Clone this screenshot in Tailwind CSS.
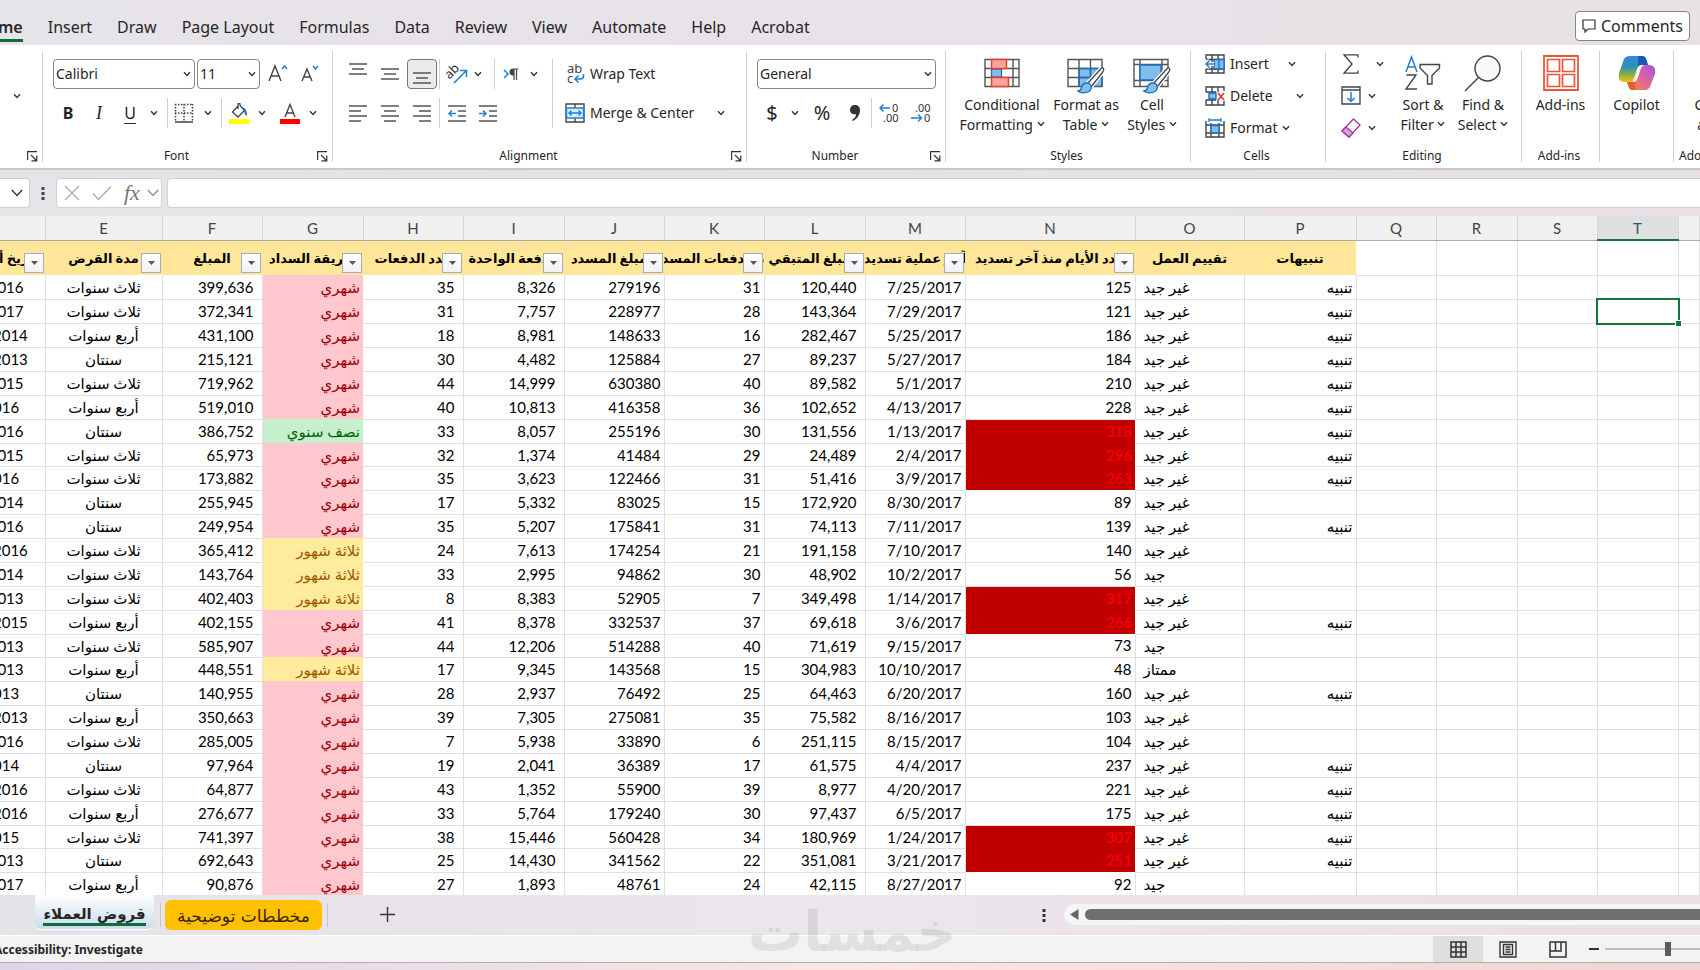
<!DOCTYPE html>
<html lang="en">
  <head>
    <meta charset="UTF-8" />
    <meta name="viewport" content="width=device-width, initial-scale=1.0" />
    <title>Workbook</title>
    <script src="https://cdn.jsdelivr.net/npm/@tailwindcss/browser@4"></script>
  </head>
  <body class="relative flex h-screen flex-col overflow-hidden bg-linear-to-r from-[#e6e3e9] to-[#e8e2e6] font-['Noto_Sans',sans-serif] text-[#262626]">
    <!-- shared icons -->
    <svg class="hidden">
      <symbol id="chev" viewBox="0 0 8 6"><path d="M1 1.2 4 4.4 7 1.2" fill="none" stroke="#333" stroke-width="1.4" /></symbol>
      <symbol id="launch" viewBox="0 0 11 11"><path d="M.6 9V.6H10M4 4l5 5M9.8 4.5v5.3H4.5" fill="none" stroke="#333" stroke-width="1.2" /></symbol>
      <symbol id="brush" viewBox="0 0 28 27">
        <path d="M26 1c1.400 1 .5 3-1 5L14 20l-4-3L21 5c2-2.500 4-5 5-4Z" fill="#fff" stroke="#fff" stroke-width="4" />
        <path d="M26 1c1.400 1 .5 3-1 5L14 20l-4-3L21 5c2-2.500 4-5 5-4Z" fill="#fff" stroke="#444" stroke-width="1.300" />
        <path d="M10 16c-4 0-5 2-5.500 4.500C4 23 2.500 24 .8 24c3 2.500 12.500 3 13.500-3 .3-3-1.500-5-4.300-5Z" fill="#83bdec" stroke="#1a6fc0" stroke-width="1.300" />
      </symbol>
    </svg>

    <!-- ribbon tabs -->
    <header class="flex h-[45px] shrink-0 items-start justify-between pr-[10px] text-base">
      <nav class="-ml-6 flex gap-[25px] pt-4 whitespace-nowrap leading-[22px]">
        <a href="#" class="border-b-[3px] border-[#0f6b38] pb-px font-semibold">Home</a>
        <a href="#">Insert</a>
        <a href="#">Draw</a>
        <a href="#">Page Layout</a>
        <a href="#">Formulas</a>
        <a href="#">Data</a>
        <a href="#">Review</a>
        <a href="#">View</a>
        <a href="#">Automate</a>
        <a href="#">Help</a>
        <a href="#">Acrobat</a>
      </nav>
      <button class="mt-[11px] flex h-[30px] items-center gap-[5px] rounded border border-[#868686] bg-white px-[6px]">
        <svg class="size-[14px]" viewBox="0 0 14 14"><path d="M1 1h12v9H6l-3 3v-3H1Z" fill="none" stroke="#333" stroke-width="1.200" /></svg>
        Comments
      </button>
    </header>

    <!-- ribbon -->
    <section class="flex h-[125px] shrink-0 overflow-hidden border-b-2 border-[#c8c8c8] bg-white pt-[6px] pb-[6px] text-sm whitespace-nowrap">
      <div class="flex w-[43px] shrink-0 flex-col items-end justify-between border-r border-[#d0d0d0]">
        <button aria-label="Paste options" class="mt-[42px] mr-[21px]"><svg class="h-[6px] w-2"><use href="#chev" /></svg></button>
        <button aria-label="Clipboard settings" class="mr-1"><svg class="size-[11px]"><use href="#launch" /></svg></button>
      </div>

      <div class="flex w-[290px] shrink-0 flex-col justify-between border-r border-[#d0d0d0]">
        <div class="flex flex-col gap-[9px] pt-2 pl-[10px]">
          <div class="flex h-[30px] items-center">
            <div class="relative mr-[2px]">
              <select aria-label="Font" class="block h-[30px] w-[142px] appearance-none rounded border border-[#868686] bg-white pl-[2px]"><option>Calibri</option></select>
              <svg class="pointer-events-none absolute top-3 right-1 h-[6px] w-2"><use href="#chev" /></svg>
            </div>
            <div class="relative">
              <select aria-label="Font size" class="block h-[30px] w-[63px] appearance-none rounded border border-[#868686] bg-white pl-[2px]"><option>11</option></select>
              <svg class="pointer-events-none absolute top-3 right-1 h-[6px] w-2"><use href="#chev" /></svg>
            </div>
            <button aria-label="Increase font size" class="flex w-9 justify-center">
              <svg class="h-5 w-5" viewBox="0 0 20 20" fill="none"><path d="M1 17 7 2l6 15M3 12h8" stroke="#444" stroke-width="1.400" /><path d="m14 5 2.500-3L19 5" stroke="#1f7fd1" stroke-width="1.500" /></svg>
            </button>
            <button aria-label="Decrease font size" class="flex w-7 justify-center">
              <svg class="h-5 w-5" viewBox="0 0 20 20" fill="none"><path d="M2 17 7 5l5 12M4 13h6" stroke="#444" stroke-width="1.400" /><path d="m13 2 2.500 3L18 2" stroke="#1f7fd1" stroke-width="1.500" /></svg>
            </button>
          </div>
          <div class="flex h-[30px] items-center">
            <button class="w-[30px] text-base font-bold">B</button>
            <button class="w-8 font-['Liberation_Serif',serif] text-lg italic">I</button>
            <button class="w-[30px] text-base underline underline-offset-4">U</button>
            <button aria-label="Underline options" class="flex w-[18px] justify-center"><svg class="h-[6px] w-2"><use href="#chev" /></svg></button>
            <span class="ml-1 h-[30px] w-px bg-[#d0d0d0]"></span>
            <button aria-label="Borders" class="flex w-8 justify-center">
              <svg class="size-5" viewBox="0 0 20 20" fill="none" stroke="#444"><path d="M1 1.500h18M1 10h18M1.500 1v18M10 1v18M18.500 1v18" stroke-width="1.500" stroke-dasharray="1.500 1.500" /><path d="M1 19h18" stroke-width="1.500" /></svg>
            </button>
            <button aria-label="Border options" class="flex w-4 justify-center"><svg class="h-[6px] w-2"><use href="#chev" /></svg></button>
            <span class="ml-[5px] h-[30px] w-px bg-[#d0d0d0]"></span>
            <button aria-label="Fill color" class="flex w-[34px] justify-center">
              <svg class="h-[21px] w-5" viewBox="0 0 20 21"><path d="M9.500 2.500 3.500 9l5.500 5 6.500-6.500L11 2.500V1.300c0-1.500-2-1.500-2 0V6" fill="#fff" stroke="#444" stroke-width="1.300" /><path d="M13 4.500c3.500 0 5 3 5 8.500-2-.5-2.500-3-3-5.500Z" fill="#1a6fc0" /><path d="M0 16h20v5H0z" fill="#ff0" /></svg>
            </button>
            <button aria-label="Fill color options" class="flex w-3 justify-center"><svg class="h-[6px] w-2"><use href="#chev" /></svg></button>
            <button aria-label="Font color" class="ml-2 flex w-7 justify-center">
              <svg class="h-[21px] w-5" viewBox="0 0 20 21"><path d="M5 14 10 1.500 15 14M6.800 10h6.400" fill="none" stroke="#444" stroke-width="1.400" /><path d="M0 16h20v5H0z" fill="red" /></svg>
            </button>
            <button aria-label="Font color options" class="flex w-[18px] justify-center"><svg class="h-[6px] w-2"><use href="#chev" /></svg></button>
          </div>
        </div>
        <div class="relative pr-[22px] text-center text-xs leading-3">Font
          <button aria-label="Font settings" class="absolute right-1 bottom-0"><svg class="size-[11px]"><use href="#launch" /></svg></button>
        </div>
      </div>

      <div class="flex w-[414px] shrink-0 flex-col justify-between border-r border-[#d0d0d0]">
        <div class="flex pt-2">
          <div class="flex w-[220px] flex-col gap-[9px] border-r border-[#d0d0d0] pl-[9px]">
            <div class="flex h-[30px] items-center">
              <button aria-label="Top align" class="flex w-8 justify-center pb-[10px]"><svg class="h-3 w-[18px]" viewBox="0 0 18 12"><path d="M0 1h18M3 6h12M0 11h18" stroke="#555" stroke-width="1.500" /></svg></button>
              <button aria-label="Middle align" class="flex w-8 justify-center"><svg class="h-3 w-[18px]" viewBox="0 0 18 12"><path d="M0 1h18M3 6h12M0 11h18" stroke="#555" stroke-width="1.500" /></svg></button>
              <button aria-label="Bottom align" class="ml-px flex h-[30px] w-[30px] items-end justify-center rounded border border-[#777] bg-[#ebebeb] pb-1"><svg class="h-3 w-[18px]" viewBox="0 0 18 12"><path d="M0 1h18M3 6h12M0 11h18" stroke="#555" stroke-width="1.500" /></svg></button>
              <span class="ml-[2px] h-[30px] w-px bg-[#d0d0d0]"></span>
              <button aria-label="Orientation" class="flex w-[34px] justify-center">
                <svg class="h-5 w-[22px]" viewBox="0 0 22 20"><g transform="rotate(-45 7 8)"><text x="-1" y="11" font-size="13" fill="#333">ab</text></g><path d="M8 19 20 7M14 6.500h6.500V13" fill="none" stroke="#1f7fd1" stroke-width="1.500" /></svg>
              </button>
              <button aria-label="Orientation options" class="flex w-2 justify-center"><svg class="h-[6px] w-2"><use href="#chev" /></svg></button>
              <span class="ml-3 h-[30px] w-px bg-[#d0d0d0]"></span>
              <button aria-label="Text direction" class="flex w-8 justify-center">
                <svg class="h-3 w-4" viewBox="0 0 16 12"><path d="m1 2 4 4-4 4" fill="none" stroke="#1f7fd1" stroke-width="1.500" /><path d="M15.500 1H10a3 3 0 0 0 0 6h.5V1M11 1v11M13.500 1v11" fill="#444" stroke="#444" stroke-width="1.200" /></svg>
              </button>
              <button aria-label="Text direction options" class="flex w-[14px] justify-center"><svg class="h-[6px] w-2"><use href="#chev" /></svg></button>
            </div>
            <div class="flex h-[30px] items-center">
              <button aria-label="Align left" class="flex w-8 justify-center"><svg class="h-[17px] w-[18px]" viewBox="0 0 18 17"><path d="M0 1h18M0 6h12M0 11h18M0 16h12" stroke="#555" stroke-width="1.500" /></svg></button>
              <button aria-label="Center" class="flex w-8 justify-center"><svg class="h-[17px] w-[18px]" viewBox="0 0 18 17"><path d="M0 1h18M3 6h12M0 11h18M3 16h12" stroke="#555" stroke-width="1.500" /></svg></button>
              <button aria-label="Align right" class="flex w-8 justify-center"><svg class="h-[17px] w-[18px]" viewBox="0 0 18 17"><path d="M0 1h18M6 6h12M0 11h18M6 16h12" stroke="#555" stroke-width="1.500" /></svg></button>
              <span class="ml-px h-[30px] w-px bg-[#d0d0d0]"></span>
              <button aria-label="Decrease indent" class="flex w-[34px] justify-center"><svg class="h-[17px] w-[18px]" viewBox="0 0 18 17" fill="none"><path d="M0 1h18M10 6h8M10 11h8M0 16h18" stroke="#555" stroke-width="1.500" /><path d="M8 8.500H1M4 5.500l-3 3 3 3" stroke="#1f7fd1" stroke-width="1.500" /></svg></button>
              <button aria-label="Increase indent" class="flex w-7 justify-center"><svg class="h-[17px] w-[18px]" viewBox="0 0 18 17" fill="none"><path d="M0 1h18M10 6h8M10 11h8M0 16h18" stroke="#555" stroke-width="1.500" /><path d="M0 8.500h7M4 5.500l3 3-3 3" stroke="#1f7fd1" stroke-width="1.500" /></svg></button>
            </div>
          </div>
          <div class="flex flex-col gap-[9px] pl-3">
            <button class="flex h-[30px] items-center gap-[5px]">
              <svg class="size-5" viewBox="0 0 20 20"><text x="2" y="9" font-size="13" fill="#444">ab</text><text x="2" y="19" font-size="13" fill="#444">c</text><path d="M18.500 10v2c0 2-1 3-3 3H10.500M13.500 11.500l-3.500 3.500 3.500 3.500" fill="none" stroke="#1f7fd1" stroke-width="1.600" /></svg>
              Wrap Text
            </button>
            <div class="flex h-[30px] items-center">
              <button class="flex w-36 items-center gap-[5px]">
                <svg class="size-5 shrink-0" viewBox="0 0 20 20" fill="none"><path d="M1 1h18v18H1zM10 1v18" stroke="#444" stroke-width="1.400" /><path d="M1.500 5h17v10h-17z" fill="#dcedfb" stroke="#1f7fd1" stroke-width="1.400" /><path d="M4 10h12M6.500 7.500 4 10l2.500 2.500M13.500 7.500 16 10l-2.500 2.500" stroke="#1f7fd1" stroke-width="1.400" /></svg>
                Merge &amp; Center
              </button>
              <button aria-label="Merge options" class="flex w-6 justify-center"><svg class="h-[6px] w-2"><use href="#chev" /></svg></button>
            </div>
          </div>
        </div>
        <div class="relative pr-[22px] text-center text-xs leading-3">Alignment
          <button aria-label="Alignment settings" class="absolute right-1 bottom-0"><svg class="size-[11px]"><use href="#launch" /></svg></button>
        </div>
      </div>

      <div class="flex w-[199px] shrink-0 flex-col justify-between border-r border-[#d0d0d0]">
        <div class="flex flex-col gap-[9px] pt-2 pl-[10px]">
          <div class="relative w-[179px]">
            <select aria-label="Number format" class="block h-[30px] w-full appearance-none rounded border border-[#868686] bg-white pl-[2px]"><option>General</option></select>
            <svg class="pointer-events-none absolute top-3 right-1 h-[6px] w-2"><use href="#chev" /></svg>
          </div>
          <div class="flex h-[30px] items-center">
            <button class="w-[30px] text-xl leading-5">$</button>
            <button aria-label="Currency options" class="flex w-4 justify-center"><svg class="h-[6px] w-2"><use href="#chev" /></svg></button>
            <button class="w-[38px] text-xl leading-5">%</button>
            <button aria-label="Comma style" class="flex w-7 justify-center"><svg class="h-4 w-[10px]" viewBox="0 0 10 16"><path d="M5 0c3 0 5 2 5 5 0 5-3 9-7.500 11L2 15c3-2 4-3.500 4-6-3.500 1-6-1-6-4s2-5 5-5Z" fill="#333" /></svg></button>
            <span class="ml-[2px] h-[30px] w-px bg-[#d0d0d0]"></span>
            <button aria-label="Increase decimal" class="flex w-[33px] justify-center">
              <svg class="h-5 w-5" viewBox="0 0 20 20" font-size="11" fill="#333"><text x="13" y="9">0</text><text x="4" y="19">.00</text><path d="M11 5H1M4.500 1.500 1 5l3.500 3.500" fill="none" stroke="#1f7fd1" stroke-width="1.500" /></svg>
            </button>
            <button aria-label="Decrease decimal" class="flex w-8 justify-center">
              <svg class="h-5 w-5" viewBox="0 0 20 20" font-size="11" fill="#333"><text x="4" y="9">.00</text><text x="13" y="19">0</text><path d="M0 15h10.500M7 11.500l3.500 3.500L7 18.500" fill="none" stroke="#1f7fd1" stroke-width="1.500" /></svg>
            </button>
          </div>
        </div>
        <div class="relative pr-[22px] text-center text-xs leading-3">Number
          <button aria-label="Number settings" class="absolute right-1 bottom-0"><svg class="size-[11px]"><use href="#launch" /></svg></button>
        </div>
      </div>

      <div class="flex w-[245px] shrink-0 flex-col justify-between border-r border-[#d0d0d0]">
        <div class="flex pt-1 pl-2 leading-5">
          <button class="flex w-24 flex-col items-center">
            <svg class="h-10 w-9" viewBox="0 0 36 40" fill="none"><path d="M1 4.500h34v27H1zM1 13.500h34M1 22.500h34M8 4.500v27M29 4.500v27" stroke="#555" stroke-width="1.400" /><path d="M7.500 14h10v8h-10z" fill="#83bdec" stroke="#1a6fc0" stroke-width="1.300" /><path d="M7.500 4.500h15v9h-15zM7.500 22.500h17v9h-17z" fill="#f8a3a0" stroke="#e8402c" stroke-width="1.500" /></svg>
            <span>Conditional<br />Formatting <svg class="inline h-[6px] w-2 align-[3px]"><use href="#chev" /></svg></span>
          </button>
          <button class="flex w-18 flex-col items-center">
            <svg class="h-10 w-[38px]" viewBox="0 0 38 40" fill="none"><path d="M12 13.500h23v18H12z" fill="#83bdec" /><path d="M1 4.500h34v27H1zM1 13.500h34M1 22.500h34M12 4.500v27M23.500 4.500v27" stroke="#555" stroke-width="1.400" /><path d="M12 31V13.500h23M23.500 13.500v18M12 22.500h23v9" stroke="#1a6fc0" stroke-width="1.400" /><use href="#brush" x="10" y="12" width="28" height="27" /></svg>
            <span>Format as<br />Table <svg class="inline h-[6px] w-2 align-[3px]"><use href="#chev" /></svg></span>
          </button>
          <button class="flex w-15 flex-col items-center">
            <svg class="h-10 w-[38px]" viewBox="0 0 38 40" fill="none"><path d="M1 4.500h34v27H1zM1 9.500h34M1 25.500h34M7 4.500v27M29 4.500v27" stroke="#555" stroke-width="1.400" /><path d="M7 10h21v15H7z" fill="#83bdec" stroke="#1a6fc0" stroke-width="1.400" /><use href="#brush" x="10" y="12" width="28" height="27" /></svg>
            <span>Cell<br />Styles <svg class="inline h-[6px] w-2 align-[3px]"><use href="#chev" /></svg></span>
          </button>
        </div>
        <div class="pr-[3px] text-center text-xs leading-3">Styles</div>
      </div>

      <div class="flex w-[135px] shrink-0 flex-col justify-between border-r border-[#d0d0d0]">
        <div class="flex flex-col gap-[6px] pl-[14px]">
          <div class="flex h-[26px] items-center">
            <button class="flex w-[79px] items-center gap-[5px]">
              <svg class="size-5 shrink-0" viewBox="0 0 20 20" fill="none"><path d="M1 5V1h18v18H1v-4M7 1v18M13 1v18M1 5.500h18M1 15h18" stroke="#444" stroke-width="1.400" /><path d="M9 5.500h10V15H9zM14 5.500V15" fill="#83bdec" stroke="#1a6fc0" stroke-width="1.300" /><path d="M9 10H1M4.500 6.500 1 10l3.500 3.500" stroke="#fff" stroke-width="4" /><path d="M10 10H1M4.500 6.500 1 10l3.500 3.500" stroke="#1f7fd1" stroke-width="1.500" /></svg>
              Insert
            </button>
            <button aria-label="Insert options" class="flex w-4 justify-center"><svg class="h-[6px] w-2"><use href="#chev" /></svg></button>
          </div>
          <div class="flex h-[26px] items-center">
            <button class="flex w-[87px] items-center gap-[5px]">
              <svg class="size-5 shrink-0" viewBox="0 0 20 20" fill="none"><path d="M1 6V1h18v4M1 14v5h18v-4M7 1v5M13 1v5M7 14v5M13 14v5M1 6h10M1 14h10" stroke="#444" stroke-width="1.400" /><path d="M4 7h7v6H4z" fill="#83bdec" stroke="#1a6fc0" stroke-width="1.400" /><path d="m13 7 6 7M19 7l-6 7" stroke="#e8301c" stroke-width="1.600" /></svg>
              Delete
            </button>
            <button aria-label="Delete options" class="flex w-4 justify-center"><svg class="h-[6px] w-2"><use href="#chev" /></svg></button>
          </div>
          <div class="flex h-[26px] items-center">
            <button class="flex w-[73px] items-center gap-[5px]">
              <svg class="size-5 shrink-0" viewBox="0 0 20 20" fill="none"><path d="M1 3v16h18V3M1 7h18M1 15h18M6 5v14M14 5v14" stroke="#444" stroke-width="1.400" /><path d="M6 7.500h8V15H6z" fill="#83bdec" stroke="#1a6fc0" stroke-width="1.400" /><path d="M4 2h12M4 0v4M16 0v4" stroke="#1f7fd1" stroke-width="1.300" /></svg>
              Format
            </button>
            <button aria-label="Format options" class="flex w-4 justify-center"><svg class="h-[6px] w-2"><use href="#chev" /></svg></button>
          </div>
        </div>
        <div class="pr-[3px] text-center text-xs leading-3">Cells</div>
      </div>

      <div class="flex w-[196px] shrink-0 flex-col justify-between border-r border-[#d0d0d0]">
        <div class="flex pl-[15px] leading-5">
          <div class="flex w-[55px] flex-col gap-[6px]">
            <div class="flex h-[26px] items-center gap-[11px]">
              <button aria-label="AutoSum"><svg class="size-5" viewBox="0 0 20 20"><path d="M17 3.500V.8H3L11 10 3 19.200h14v-2.700" fill="none" stroke="#444" stroke-width="1.300" /></svg></button>
              <button aria-label="AutoSum options" class="flex w-4 justify-center"><svg class="h-[6px] w-2"><use href="#chev" /></svg></button>
            </div>
            <div class="flex h-[26px] items-center gap-[3px]">
              <button aria-label="Fill"><svg class="size-5" viewBox="0 0 20 20" fill="none"><path d="M1 1h18v17H1zM1 4h18" stroke="#444" stroke-width="1.400" /><path d="M10 6v9M6.500 12l3.500 3.500 3.500-3.500" stroke="#1f7fd1" stroke-width="1.500" /></svg></button>
              <button aria-label="Fill options" class="flex w-4 justify-center"><svg class="h-[6px] w-2"><use href="#chev" /></svg></button>
            </div>
            <div class="flex h-[26px] items-center gap-[3px]">
              <button aria-label="Clear"><svg class="size-5" viewBox="0 0 20 20"><path d="M12.500 1 19 7 8 19l-7-6Z" fill="#fff" stroke="#a4399a" stroke-width="1.300" /><path d="m5 9 7 6-4 4-7-6Z" fill="#d9a3d5" stroke="#a4399a" stroke-width="1.300" /></svg></button>
              <button aria-label="Clear options" class="flex w-4 justify-center"><svg class="h-[6px] w-2"><use href="#chev" /></svg></button>
            </div>
          </div>
          <button class="flex w-[54px] flex-col items-center pt-1">
            <svg class="h-10 w-[38px]" viewBox="0 0 38 40" fill="none"><path d="m2 17 5.500-15L13 17M4 12h7" stroke="#1f7fd1" stroke-width="1.500" /><path d="M2.500 20h9.500L2 34h11" stroke="#444" stroke-width="1.400" /><path d="M16 9.500h19.500V13L28 20.500V29h-4.500v-8.500L16 13Z" fill="#fafafa" stroke="#444" stroke-width="1.400" /></svg>
            <span>Sort &amp;<br />Filter <svg class="inline h-[6px] w-2 align-[3px]"><use href="#chev" /></svg></span>
          </button>
          <button class="ml-[3px] flex w-[60px] flex-col items-center pt-1">
            <svg class="h-10 w-[38px]" viewBox="0 0 38 40"><circle cx="23.500" cy="13.500" r="12.500" fill="#fafafa" stroke="#444" stroke-width="1.400" /><path d="M14.500 22.500 1 36" stroke="#444" stroke-width="1.500" /></svg>
            <span>Find &amp;<br />Select <svg class="inline h-[6px] w-2 align-[3px]"><use href="#chev" /></svg></span>
          </button>
        </div>
        <div class="pr-[3px] text-center text-xs leading-3">Editing</div>
      </div>

      <div class="flex w-[78px] shrink-0 flex-col justify-between border-r border-[#d0d0d0]">
        <button class="flex flex-col items-center pt-1 leading-5">
          <svg class="h-10 w-9" viewBox="0 0 36 40" fill="none"><path d="M1 1h34v34H1z" stroke="#e9573a" stroke-width="1.800" /><path d="M4.500 4.500h12v12h-12zM19.500 4.500h12v12h-12zM4.500 19.500h12v12h-12zM19.500 19.500h12v12h-12z" stroke="#e9573a" stroke-width="1.700" /></svg>
          Add-ins
        </button>
        <div class="pr-[3px] text-center text-xs leading-3">Add-ins</div>
      </div>

      <div class="w-[74px] shrink-0 border-r border-[#d0d0d0]">
        <button class="flex w-full flex-col items-center pt-1 leading-5">
          <svg class="h-10 w-[38px]" viewBox="0 0 38 40">
            <defs>
              <linearGradient id="cp1" x1="0" y1="0" x2="0" y2="1"><stop offset="0" stop-color="#2a8de0" /><stop offset=".4" stop-color="#2f8fb8" /><stop offset=".7" stop-color="#7fb04a" /><stop offset="1" stop-color="#f3c21a" /></linearGradient>
              <linearGradient id="cp2" x1="1" y1="0" x2="0" y2="1"><stop offset="0" stop-color="#a94fe0" /><stop offset=".5" stop-color="#e0679a" /><stop offset="1" stop-color="#f88a3c" /></linearGradient>
            </defs>
            <path d="M12 1h12c3 0 4 2 5 6l1 3h-6c-3 0-4 1-5 4l-3 9c-1 3-2 4-5 4H6c-5 0-6-4-5-9L5 7c1-4 3-6 7-6Z" fill="url(#cp1)" />
            <path d="M20 1h4c3 0 4 2 5 6l1 3h-6c-2 0-3 0-4 2-1-3 1-6 0-11Z" fill="#175bb5" />
            <path d="M26 35H15c-3 0-4-2-5-5l-1-3h3c3 0 4-2 5-5l3-8c1-3 2-4 5-4h6c5 0 7 4 6 9l-4 10c-1 4-3 6-7 6Z" fill="url(#cp2)" />
            <path d="M18 35h-3c-3 0-4-2-5-5l-1-3h3c3 0 4-1 5-3 1 4-1 7 1 11Z" fill="#e85a2c" />
            <path d="M20 13c1-2 2-3 4-3h2c-2 1-3 3-4 6l-2 6c-1 3-2 5-5 5h-1c2-1 3-4 4-7Z" fill="#fff" />
          </svg>
          Copilot
        </button>
      </div>

      <div class="flex w-[90px] shrink-0 flex-col justify-between pl-[5px]">
        <button class="w-[74px] pt-11 leading-5">Create<br />a PDF</button>
        <div class="text-xs leading-3">Adobe Acrobat</div>
      </div>
    </section>

    <!-- formula bar -->
    <section class="flex h-[46px] shrink-0 items-center pb-px">
      <button aria-label="Name box" class="flex h-[30px] w-[30px] items-center justify-end rounded-r border border-l-0 border-[#d2cfd4] bg-white pr-[6px]"><svg class="h-2 w-3" viewBox="0 0 12 8"><path d="m.8 1 5.200 5.500L11.200 1" fill="none" stroke="#333" stroke-width="1.300" /></svg></button>
      <svg class="mx-[11px] h-4 w-1" viewBox="0 0 4 16"><path d="M.5 2h3v3h-3zM.5 7h3v3h-3zM.5 12h3v3h-3z" fill="#444" /></svg>
      <div class="flex h-[30px] w-[106px] items-center rounded border border-[#d2cfd4] bg-white pl-[7px]">
        <button aria-label="Cancel"><svg class="size-4" viewBox="0 0 16 16"><path d="m1 1 14 14M15 1 1 15" stroke="#aaa" stroke-width="1.200" /></svg></button>
        <button aria-label="Enter" class="ml-3"><svg class="h-4 w-5" viewBox="0 0 20 16"><path d="m1 8.500 5.500 6L19 1.500" fill="none" stroke="#aaa" stroke-width="1.300" /></svg></button>
        <button class="ml-3 font-['Liberation_Serif',serif] text-[22px] leading-5 text-[#777] italic">fx</button>
        <button aria-label="Function options" class="ml-[7px]"><svg class="h-2 w-3" viewBox="0 0 12 8"><path d="m.8 1 5.200 5.500L11.200 1" fill="none" stroke="#888" stroke-width="1.200" /></svg></button>
      </div>
      <input type="text" aria-label="Formula" class="ml-[5px] h-[30px] flex-1 rounded-l border border-r-0 border-[#d2cfd4] bg-white" />
    </section>

    <!-- sheet -->
    <main class="min-h-0 flex-1 overflow-hidden bg-white">
      <table class="-ml-[72px] w-[calc(100%+72px)] table-fixed border-collapse font-['Lato','DejaVu_Sans',sans-serif] text-[15px] leading-5 text-black">
        <colgroup>
          <col class="w-[117px]" /><col class="w-[117px]" /><col class="w-[100px]" /><col class="w-[101px]" /><col class="w-[100px]" /><col class="w-[101px]" /><col class="w-[100px]" /><col class="w-[100px]" /><col class="w-[101px]" /><col class="w-[100px]" /><col class="w-[170px]" /><col class="w-[109px]" /><col class="w-[112px]" /><col class="w-[80px]" /><col class="w-[81px]" /><col class="w-[80px]" /><col class="w-[81px]" /><col />
        </colgroup>
        <thead>
          <tr id="letters" class="h-6 bg-[#f0f0f0] text-[#444]"></tr>
          <tr id="titles" class="h-[35px] text-[13px]"></tr>
        </thead>
        <tbody id="rows"></tbody>
      </table>
    </main>

    <!-- sheet tabs -->
    <footer class="flex h-10 shrink-0 items-start overflow-hidden bg-linear-to-r from-[#e5e2e8] via-[#ece5ec] to-[#e8e0e2] font-['DejaVu_Sans',sans-serif]">
      <button class="ml-[35px] h-[35px] w-[119px] rounded-b-md border-b border-white bg-linear-to-b from-white to-[#c8dcec] pt-1 text-[15px] font-bold"><span class="border-b-[3px] border-[#0f6b38]">قروض العملاء</span></button>
      <span class="mt-2 ml-[6px] h-6 w-px bg-[#c9c5cb]"></span>
      <button class="mt-[5px] ml-1 h-[30px] w-[157px] rounded-md bg-[#ffc000] pt-[2px] text-[17px] leading-6 text-[#3a2500]">مخططات توضيحية</button>
      <span class="mt-2 ml-[5px] h-6 w-px bg-[#c9c5cb]"></span>
      <button aria-label="New sheet" class="mt-3 ml-[52px]"><svg class="size-[15px]" viewBox="0 0 15 15"><path d="M7.500 0v15M0 7.500h15" stroke="#333" stroke-width="1.400" /></svg></button>
      <svg class="mt-[13px] mr-[18px] ml-auto h-4 w-1" viewBox="0 0 4 16"><path d="M.5 1h3v3h-3zM.5 6h3v3h-3zM.5 11h3v3h-3z" fill="#333" /></svg>
      <div class="mt-[9px] flex h-[21px] w-[636px] items-center rounded-l-full bg-[#f5f5f5] pl-[6px]">
        <button aria-label="Scroll left"><svg class="h-[11px] w-[9px]" viewBox="0 0 9 11"><path d="M8.500 0v11L0 5.500Z" fill="#666" /></svg></button>
        <div class="ml-[6px] h-[11px] flex-1 rounded-l-full bg-[#6f6f6f]"></div>
      </div>
    </footer>

    <!-- status bar -->
    <footer class="flex h-7 shrink-0 items-center overflow-hidden border-t border-b border-t-white border-b-[#b3abb0] bg-[#f3f3f3] whitespace-nowrap">
      <span class="-ml-[6px] pt-px text-xs font-bold">Accessibility: Investigate</span>
      <button aria-label="Normal view" class="ml-auto flex h-full w-[50px] items-center justify-center bg-[#dedede]"><svg class="size-[17px]" viewBox="0 0 17 17"><path d="M1 1h15v15H1zM6 1v15M11 1v15M1 6h15M1 11h15" fill="none" stroke="#333" stroke-width="1.500" /></svg></button>
      <button aria-label="Page layout view" class="flex w-[50px] justify-center"><svg class="h-[17px] w-[18px]" viewBox="0 0 18 17"><path d="M1 1h16v15H1zM4.500 3.500h9v10h-9zM6.500 6h5M6.500 8.500h5M6.500 11h5" fill="none" stroke="#333" stroke-width="1.400" /></svg></button>
      <button aria-label="Page break preview" class="flex w-[50px] justify-center"><svg class="h-[17px] w-[18px]" viewBox="0 0 18 17"><path d="M1 1h16v15H1zM1 10h11V1M6.500 1v9" fill="none" stroke="#333" stroke-width="1.500" /></svg></button>
      <button aria-label="Zoom out" class="ml-[6px]"><svg class="h-[2px] w-[10px]" viewBox="0 0 10 2"><path d="M0 0h10v2H0z" fill="#333" /></svg></button>
      <div class="ml-[6px] w-[95px] overflow-hidden">
        <input type="range" aria-label="Zoom" value="50" class="block h-4 w-[126px] appearance-none bg-linear-to-b from-transparent from-45% via-[#666] via-50% to-transparent to-55% [&::-webkit-slider-thumb]:h-[14px] [&::-webkit-slider-thumb]:w-[6px] [&::-webkit-slider-thumb]:appearance-none [&::-webkit-slider-thumb]:bg-[#5c5c5c]" />
      </div>
    </footer>
    <div class="h-[7px] shrink-0 bg-linear-to-r from-[#ddd6ea] via-[#fae6e1] to-[#eed6d3]"></div>

    <div class="pointer-events-none absolute bottom-2 left-[748px] font-['DejaVu_Sans',sans-serif] text-[55px] leading-[60px] font-bold text-black/8">خمسات</div>

    <script>
      const letters = ["D", "E", "F", "G", "H", "I", "J", "K", "L", "M", "N", "O", "P", "Q", "R", "S", "T", ""];
      const titles = [
        "تاريخ أخذ القرض", "مدة القرض", "المبلغ", "طريقة السداد", "عدد الدفعات", "الدفعة الواحدة",
        "المبلغ المسدد", "عدد الدفعات المسددة", "المبلغ المتبقي", "آخر عملية تسديد", "عدد الأيام منذ آخر تسديد",
        "تقييم العمل", "تنبيهات",
      ];
      const two = "سنتان", three = "ثلاث سنوات", four = "أربع سنوات";
      const monthly = "شهري", quarter = "ثلاثة شهور", half = "نصف سنوي";
      const bad = "غير جيد", good = "جيد", best = "ممتاز", alert = "تنبيه";
      const loans = [
        ["8/25/2016", three, "399,636", monthly, 35, "8,326", 279196, 31, "120,440", "7/25/2017", 125, bad, alert],
        ["1/29/2017", three, "372,341", monthly, 31, "7,757", 228977, 28, "143,364", "7/29/2017", 121, bad, alert],
        ["11/25/2014", four, "431,100", monthly, 18, "8,981", 148633, 16, "282,467", "5/25/2017", 186, bad, alert],
        ["12/27/2013", two, "215,121", monthly, 30, "4,482", 125884, 27, "89,237", "5/27/2017", 184, bad, alert],
        ["10/1/2015", three, "719,962", monthly, 44, "14,999", 630380, 40, "89,582", "5/1/2017", 210, bad, alert],
        ["4/3/2016", four, "519,010", monthly, 40, "10,813", 416358, 36, "102,652", "4/13/2017", 228, bad, alert],
        ["1/13/2016", two, "386,752", half, 33, "8,057", 255196, 30, "131,556", "1/13/2017", 318, bad, alert],
        ["10/4/2015", three, "65,973", monthly, 32, "1,374", 41484, 29, "24,489", "2/4/2017", 296, bad, alert],
        ["3/9/2016", three, "173,882", monthly, 35, "3,623", 122466, 31, "51,416", "3/9/2017", 263, bad, alert],
        ["8/30/2014", two, "255,945", monthly, 17, "5,332", 83025, 15, "172,920", "8/30/2017", 89, bad, ""],
        ["7/11/2016", two, "249,954", monthly, 35, "5,207", 175841, 31, "74,113", "7/11/2017", 139, bad, alert],
        ["10/10/2016", three, "365,412", quarter, 24, "7,613", 174254, 21, "191,158", "7/10/2017", 140, bad, ""],
        ["10/2/2014", three, "143,764", quarter, 33, "2,995", 94862, 30, "48,902", "10/2/2017", 56, good, ""],
        ["1/14/2013", three, "402,403", quarter, 8, "8,383", 52905, 7, "349,498", "1/14/2017", 317, bad, ""],
        ["12/16/2015", four, "402,155", monthly, 41, "8,378", 332537, 37, "69,618", "3/6/2017", 266, bad, alert],
        ["9/15/2013", three, "585,907", monthly, 44, "12,206", 514288, 40, "71,619", "9/15/2017", 73, good, ""],
        ["5/10/2013", four, "448,551", quarter, 17, "9,345", 143568, 15, "304,983", "10/10/2017", 48, best, ""],
        ["6/2/2013", two, "140,955", monthly, 28, "2,937", 76492, 25, "64,463", "6/20/2017", 160, bad, alert],
        ["12/16/2013", four, "350,663", monthly, 39, "7,305", 275081, 35, "75,582", "8/16/2017", 103, bad, ""],
        ["8/15/2016", three, "285,005", monthly, 7, "5,938", 33890, 6, "251,115", "8/15/2017", 104, bad, ""],
        ["4/4/2014", two, "97,964", monthly, 19, "2,041", 36389, 17, "61,575", "4/4/2017", 237, bad, alert],
        ["12/20/2016", three, "64,877", monthly, 43, "1,352", 55900, 39, "8,977", "4/20/2017", 221, bad, alert],
        ["11/15/2016", four, "276,677", monthly, 33, "5,764", 179240, 30, "97,437", "6/5/2017", 175, bad, alert],
        ["1/4/2015", three, "741,397", monthly, 38, "15,446", 560428, 34, "180,969", "1/24/2017", 307, bad, alert],
        ["3/21/2013", two, "692,643", monthly, 25, "14,430", 341562, 22, "351,081", "3/21/2017", 251, bad, alert],
        ["8/27/2017", four, "90,876", monthly, 27, "1,893", 48761, 24, "42,115", "8/27/2017", 92, good, ""],
      ];

      const align = [
        "text-center", "text-center", "text-right pr-2", "text-right pr-[3px]", "text-right pr-2", "text-right pr-2",
        "text-right pr-[3px]", "text-right pr-[3px]", "text-right pr-2", "text-right pr-[3px]", "text-right pr-[3px]",
        "text-left pl-2", "text-right pr-[3px]", "", "", "", "", "",
      ];

      const periodColor = {
        [monthly]: "bg-[#ffc7ce] text-[#9c0006]",
        [quarter]: "bg-[#ffeb9c] text-[#9c5700]",
        [half]: "bg-[#c6efce] text-[#006100]",
      };

      const selection = `
        <div class="absolute -inset-[2px] border-2 border-[#127440]"></div>
        <div class="absolute -right-1 -bottom-1 size-[7px] border border-white bg-[#127440]"></div>`;

      document.getElementById("letters").innerHTML = letters.map((letter) => `
        <th class="border-r border-b border-r-[#d6d6d6] p-0 pt-px font-normal ${letter === "T" ? "border-b-2 border-b-[#127440] bg-[#dfdfdf] text-[#1c5a7d]" : "border-b-[#aaa]"}">${letter}</th>`
      ).join("");

      document.getElementById("titles").innerHTML = letters.map((letter, col) => {
        if (col > 12) return `<td class="border-r border-b border-[#e0e0e0]"></td>`;
        const filter = col > 10 ? "" : `
          <button aria-label="Filter ${letter}" class="absolute right-px bottom-[2px] flex size-5 items-center justify-center border border-[#a3adc0] bg-linear-to-b from-white to-[#f0f1f5]">
            <svg class="h-1 w-[7px]" viewBox="0 0 7 4"><path d="M0 0h7L3.500 4Z" fill="#555" /></svg>
          </button>`;
        return `
          <th class="relative bg-[#ffe699] p-0">
            <div class="flex justify-center overflow-hidden whitespace-nowrap" dir="rtl"><span class="shrink-0">${titles[col]}</span></div>${filter}
          </th>`;
      }).join("");

      document.getElementById("rows").innerHTML = loans.map((loan, row) => {
        const cells = letters.map((letter, col) => {
          const value = loan[col] ?? "";
          let color = "border-r border-b border-[#e0e0e0]";
          if (letter === "G") color = periodColor[value];
          if (letter === "N" && value > 250) color = "bg-[#c00000] text-[#ff0000]";
          const picked = letter === "T" && row === 1;
          return `<td class="p-0 whitespace-nowrap ${align[col]} ${color} ${picked ? "relative" : ""}">${picked ? selection : value}</td>`;
        });
        return `<tr class="h-6 nth-[8n]:h-[23px]">${cells.join("")}</tr>`;
      }).join("");
    </script>
  </body>
</html>
